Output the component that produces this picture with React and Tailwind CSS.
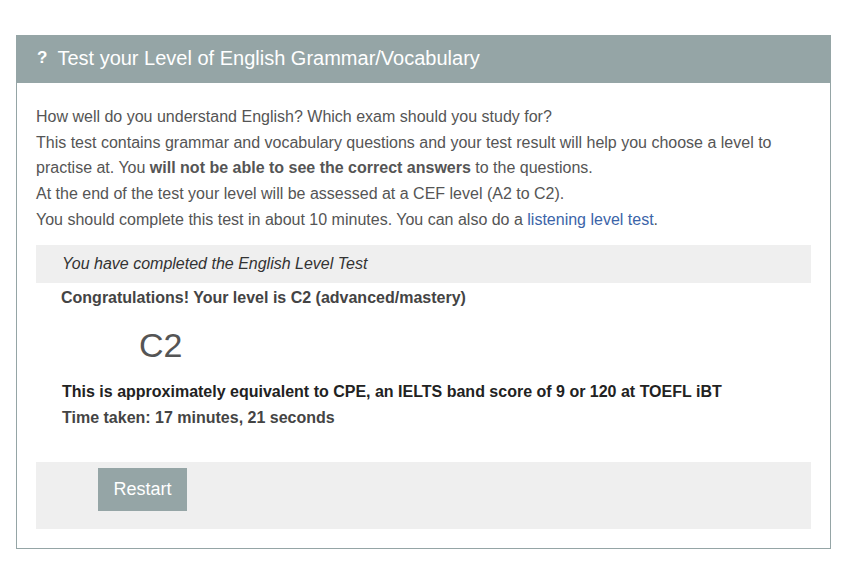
import React from "react";

const App = () => {
  return (
    <div className="min-h-screen bg-white pt-[35px] px-[16px] font-['Liberation_Sans',Arial,sans-serif]">
      <div className="w-[815px] border border-[#95a5a6]">
        {/* Header */}
        <div className="h-[47px] bg-[#95a5a6] flex items-center pl-[20px] pb-[3px] text-white">
          <span className="font-bold text-[17px] mr-[10px]">?</span>
          <span className="text-[20px]">Test your Level of English Grammar/Vocabulary</span>
        </div>

        {/* Body */}
        <div className="px-[19px] pt-[21px] pb-[19px] text-[16px] text-[#555]">
          <div className="leading-[25.7px]">
            <p>How well do you understand English? Which exam should you study for?</p>
            <p>
              This test contains grammar and vocabulary questions and your test result will help you choose a level to
              practise at. You <b>will not be able to see the correct answers</b> to the questions.
            </p>
            <p>At the end of the test your level will be assessed at a CEF level (A2 to C2).</p>
            <p>
              You should complete this test in about 10 minutes. You can also do a{" "}
              <a href="#" className="text-[#3b64a8]">listening level test</a>.
            </p>
          </div>

          <div className="mt-[12px] bg-[#efefef] h-[38px] flex items-center pl-[26px] italic text-[#333]">
            You have completed the English Level Test
          </div>

          <div className="pl-[25px] pt-[2px]">
            <p className="font-bold text-[#444] leading-[25px]">Congratulations! Your level is C2 (advanced/mastery)</p>
            <p className="text-[34px] text-[#555] pl-[78px] leading-[40px] mt-[15px]">C2</p>
            <p className="font-bold text-[#222] leading-[26px] mt-[14px] pl-[1px]">
              This is approximately equivalent to CPE, an IELTS band score of 9 or 120 at TOEFL iBT
            </p>
            <p className="font-bold text-[#444] leading-[26px] pl-[1px]">Time taken: 17 minutes, 21 seconds</p>
          </div>

          <div className="mt-[31px] bg-[#efefef] h-[67px] pt-[6px] pl-[62px]">
            <button className="bg-[#95a5a6] text-white text-[18px] w-[89px] h-[43px]">Restart</button>
          </div>
        </div>
      </div>
    </div>
  );
};

export default App;
